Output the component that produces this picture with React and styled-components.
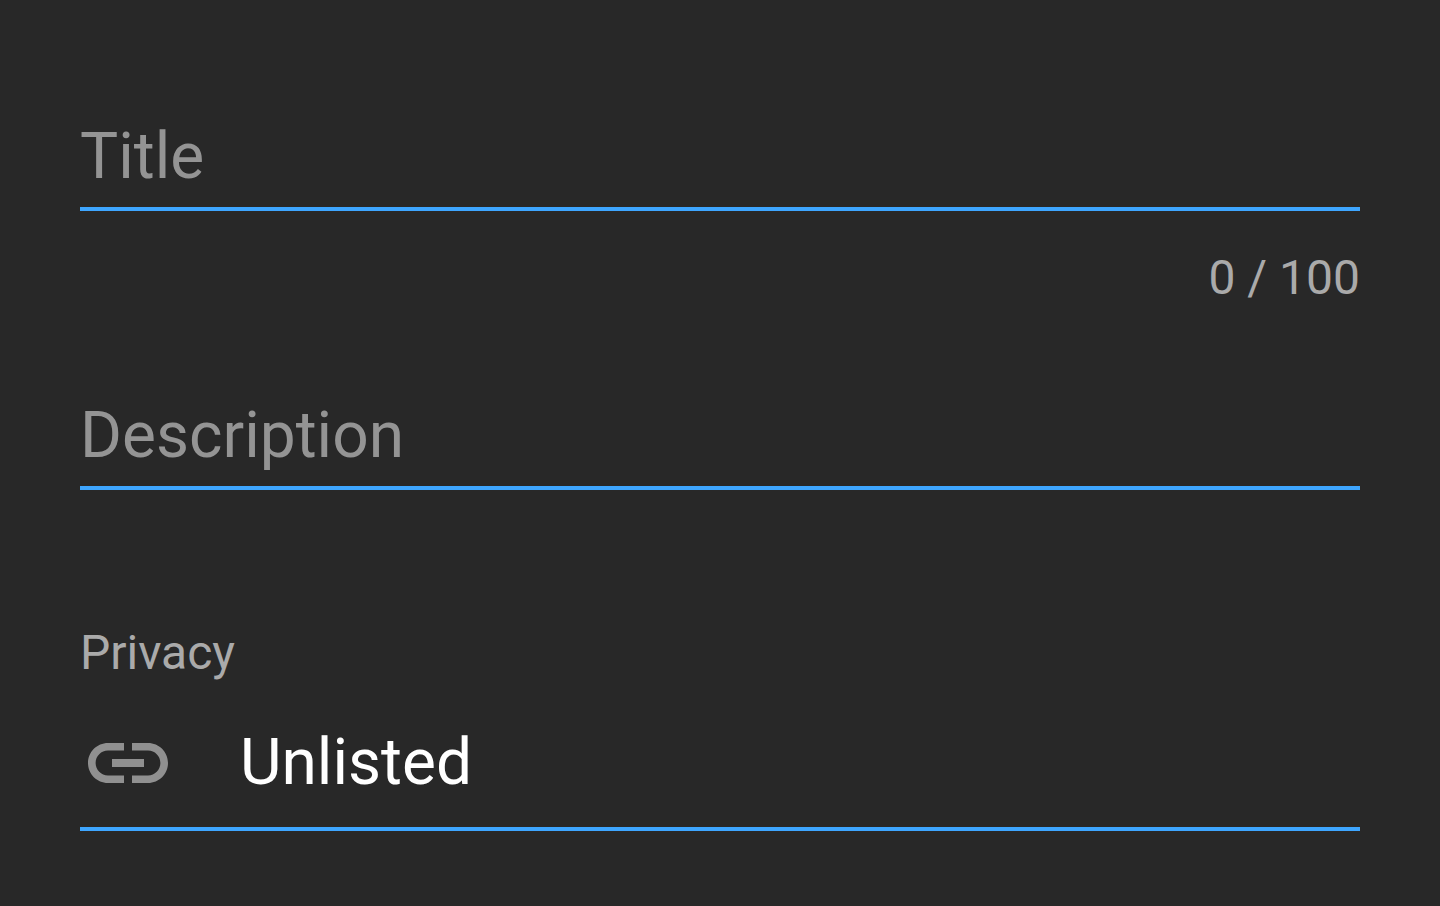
import React, { useState } from "react";
import styled, { createGlobalStyle } from "styled-components";

const GlobalStyle = createGlobalStyle`
  *, *::before, *::after { box-sizing: border-box; }
  body {
    margin: 0;
    background: #282828;
    font-family: Roboto, "Liberation Sans", sans-serif;
  }
`;

const Form = styled.form`
  display: flex;
  flex-direction: column;
  padding: 108px 80px 72px;
  color: #aaaaaa;
`;

const Field = styled.div`
  display: flex;
  flex-direction: column;
  margin-top: ${(p) => p.$gap || 0}px;
`;

const TextInput = styled.input`
  width: 100%;
  height: 103px;
  padding: 0 0 3px;
  border: 0;
  border-bottom: 4px solid #3ea6ff;
  border-radius: 0;
  outline: 0;
  background: transparent;
  color: #ffffff;
  font: 400 64px/96px Roboto, "Liberation Sans", sans-serif;
  &::placeholder { color: #949494; opacity: 1; }
`;

const Counter = styled.output`
  align-self: flex-end;
  margin-top: 37px;
  font-size: 48px;
  line-height: 60px;
`;

const Label = styled.label`
  font-size: 48px;
  line-height: 60px;
`;

const SelectRow = styled.div`
  display: flex;
  align-items: center;
  gap: 64px;
  height: 148px;
  padding-top: 16px;
  border-bottom: 4px solid #3ea6ff;
`;

const LinkIcon = styled.svg`
  flex: none;
  width: 96px;
  height: 96px;
  fill: #909090;
`;

const Select = styled.select`
  flex: 1;
  min-width: 0;
  height: 96px;
  padding: 0 0 4px;
  border: 0;
  outline: 0;
  appearance: none;
  background: transparent;
  color: #ffffff;
  font: 400 64px/96px Roboto, "Liberation Sans", sans-serif;
  option { background: #282828; }
`;

export default function App() {
  const [title, setTitle] = useState("");
  return (
    <>
      <GlobalStyle />
      <Form>
        <Field>
          <TextInput
            aria-label="Title"
            placeholder="Title"
            maxLength={100}
            value={title}
            onChange={(e) => setTitle(e.target.value)}
          />
          <Counter>{`${title.length} / 100`}</Counter>
        </Field>
        <Field $gap={79}>
          <TextInput aria-label="Description" placeholder="Description" />
        </Field>
        <Field $gap={133}>
          <Label htmlFor="privacy">Privacy</Label>
          <SelectRow>
            <LinkIcon viewBox="0 0 24 24" aria-hidden="true">
              <path d="M3.9 12c0-1.71 1.39-3.1 3.1-3.1h4V7H7c-2.76 0-5 2.24-5 5s2.24 5 5 5h4v-1.9H7c-1.71 0-3.1-1.39-3.1-3.1zM8 13h8v-2H8v2zm9-6h-4v1.9h4c1.71 0 3.1 1.39 3.1 3.1s-1.39 3.1-3.1 3.1h-4V17h4c2.76 0 5-2.24 5-5s-2.24-5-5-5z" />
            </LinkIcon>
            <Select id="privacy" defaultValue="Unlisted">
              <option>Unlisted</option>
            </Select>
          </SelectRow>
        </Field>
      </Form>
    </>
  );
}
